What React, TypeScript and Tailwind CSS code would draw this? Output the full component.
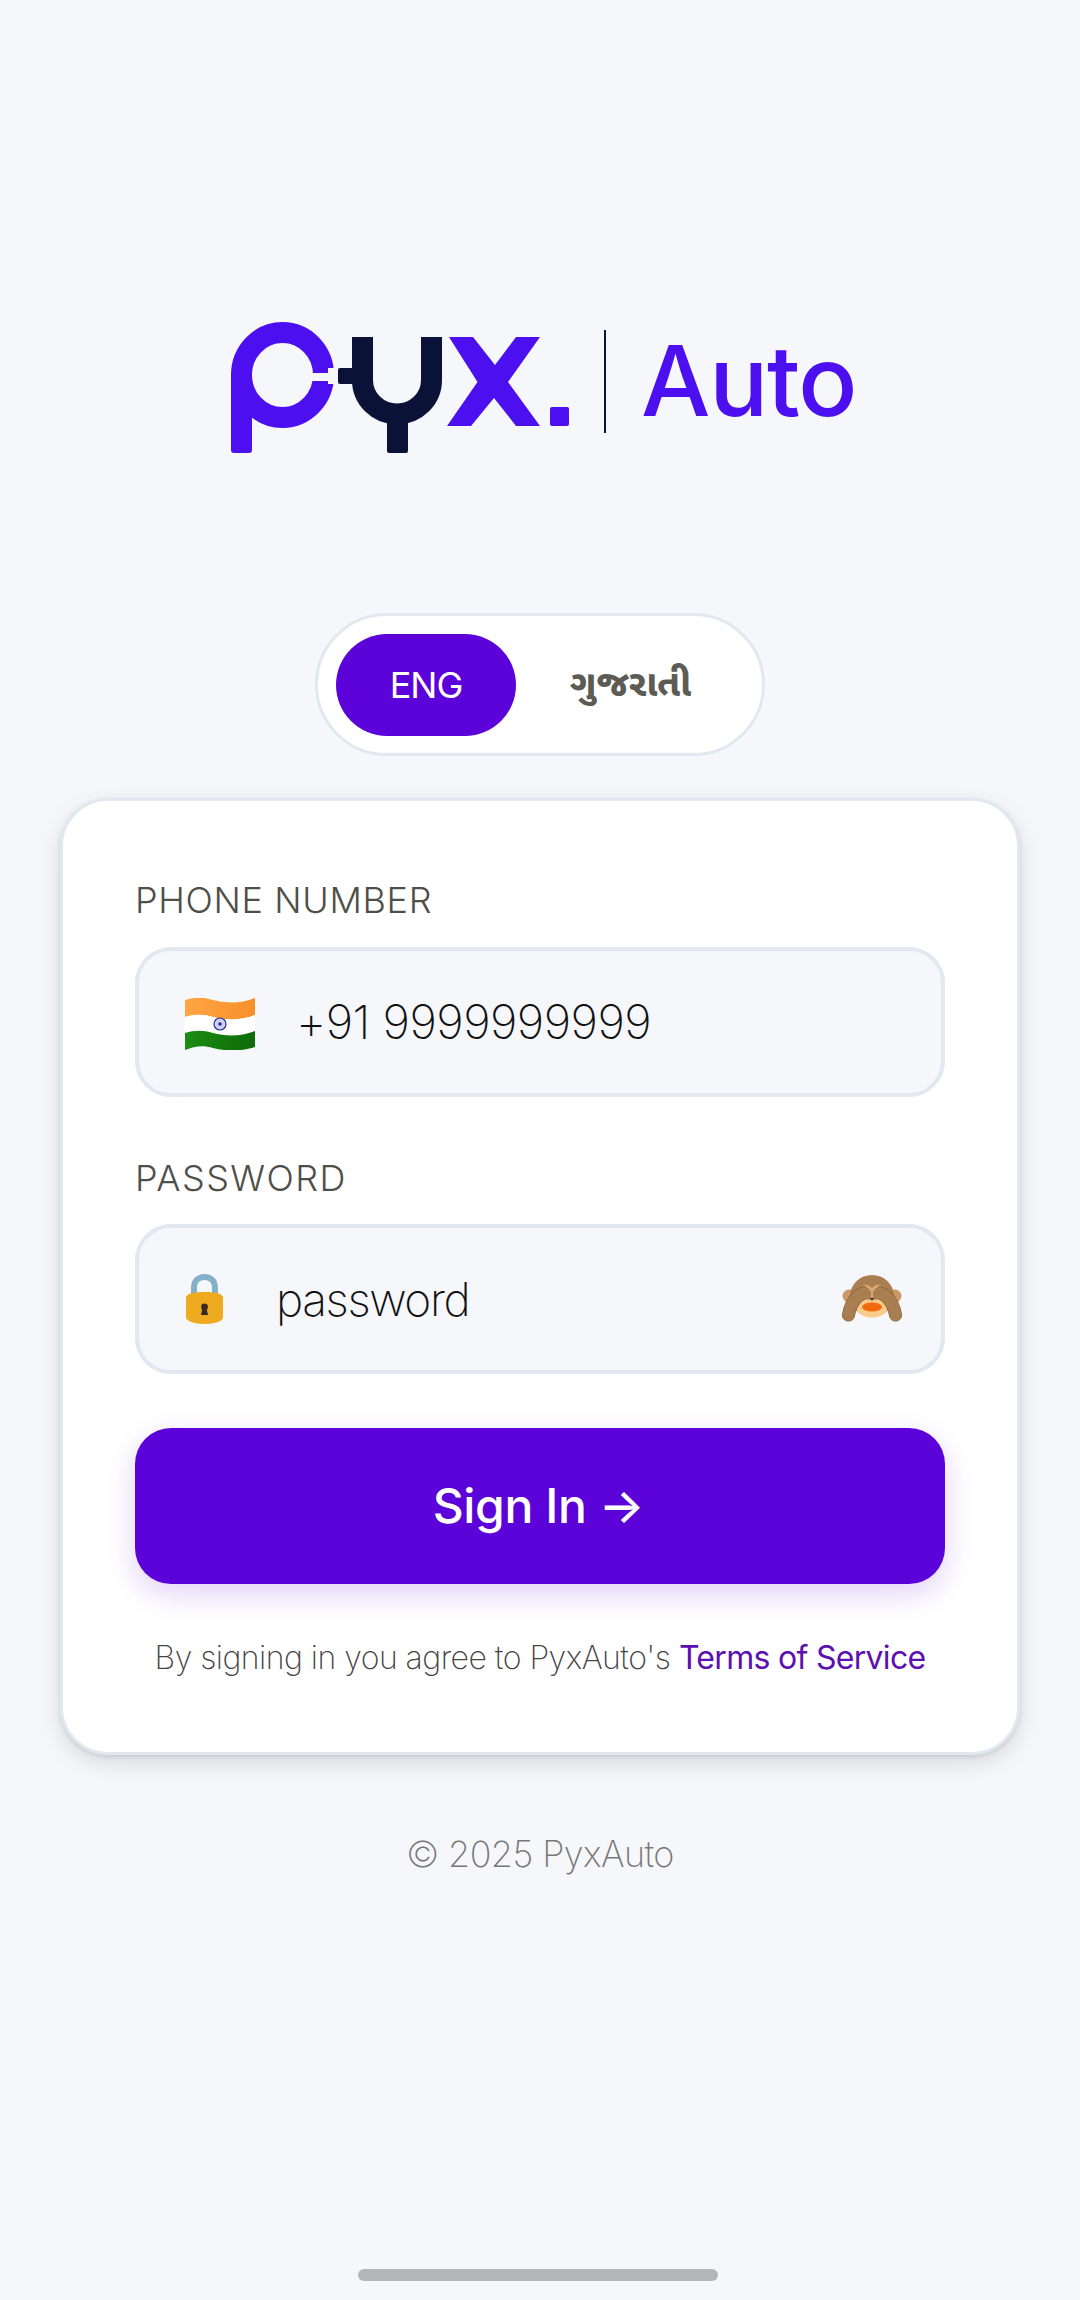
import React from 'react';

const Logo = () => (
  <svg width="340" height="134" viewBox="231 320 340 134" className="block shrink-0" aria-label="pyx logo">
    {/* p: ring, stem, then the stepped notch cut out of the ring */}
    <ellipse cx="282.5" cy="375" rx="41" ry="42.5" fill="none" stroke="#4b0ff0" strokeWidth="21" />
    <path d="M231 375 H252 V450 Q252 453 249 453 H234 Q231 453 231 450 Z" fill="#4b0ff0" />
    <path d="M312 373 H328 V368 H336 V384 H328 V381 H312 Z" fill="#f5f7fb" />
    {/* y */}
    <path d="M362.5 337 V380 A34.5 34 0 0 0 431.5 380 V337" fill="none" stroke="#0a1238" strokeWidth="21" />
    <rect x="338" y="368" width="20" height="16" rx="2" fill="#0a1238" />
    <rect x="387" y="405" width="21" height="48" rx="2" fill="#0a1238" />
    {/* x */}
    <polygon points="449,337 473,337 495,365 516,337 540,337 508,382 540,426 516,426 494,398 471,426 447,426 477.5,382" fill="#4b0ff0" />
    <rect x="550" y="407" width="19" height="19" rx="2" fill="#4b0ff0" />
  </svg>
);

const IndiaFlag = () => (
  <svg width="70" height="52" viewBox="0 0 70 52" className="mt-[3px]">
    <defs>
      <linearGradient id="saffron" x1="0" x2="1" y1="0" y2="0">
        <stop offset="0" stopColor="#ffa544" />
        <stop offset="1" stopColor="#f7902a" />
      </linearGradient>
      <linearGradient id="green" x1="0" x2="1" y1="0" y2="0">
        <stop offset="0" stopColor="#1c8c12" />
        <stop offset="1" stopColor="#0d6b0a" />
      </linearGradient>
    </defs>
    <path d="M0 2 C10 -1 18 -1 28 2 C40 5 55 6 70 0 V17 C55 23 40 22 28 19 C18 16 10 16 0 19 Z" fill="url(#saffron)" />
    <path d="M0 19 C10 16 18 16 28 19 C40 22 55 23 70 17 V33 C55 39 40 38 28 35 C18 32 10 32 0 35 Z" fill="#ffffff" />
    <path d="M0 35 C10 32 18 32 28 35 C40 38 55 39 70 33 V49 C55 54 40 53 28 50 C18 47 10 48 0 52 Z" fill="url(#green)" />
    <circle cx="35" cy="26" r="6" fill="#cfd2f5" stroke="#2b2f8f" strokeWidth="1.2" />
    <circle cx="35" cy="26" r="1.8" fill="#2b2f8f" />
  </svg>
);

const LockEmoji = () => (
  <svg width="37" height="50" viewBox="0 0 37 50">
    <path d="M8 22 V14 C8 7 12 3 18.5 3 C25 3 29 7 29 14 V22" fill="none" stroke="#84b0c9" strokeWidth="6" />
    <path d="M0 24 C0 20 6 18 18.5 18 C31 18 37 20 37 24 V43 C37 47 30 50 18.5 50 C7 50 0 47 0 43 Z" fill="#eeab1f" />
    <circle cx="18.5" cy="33" r="3.4" fill="#3e2723" />
    <path d="M16.5 34 H20.5 L22 41 H15 Z" fill="#3e2723" />
  </svg>
);

const MonkeyEmoji = () => (
  <svg width="62" height="50" viewBox="0 0 62 50">
    <circle cx="8" cy="22" r="6.5" fill="#c99a63" />
    <circle cx="54" cy="22" r="6.5" fill="#c99a63" />
    <ellipse cx="31" cy="22" rx="22" ry="21" fill="#a97f52" />
    <ellipse cx="31" cy="33" rx="16" ry="10.5" fill="#f9cc8b" />
    <ellipse cx="31" cy="33" rx="10" ry="4.5" fill="#f26a0f" />
    <path d="M28 19 C20 17 10 26 7.5 41" fill="none" stroke="#7d5a34" strokeWidth="13" strokeLinecap="round" />
    <path d="M34 19 C42 17 52 26 54.5 41" fill="none" stroke="#7d5a34" strokeWidth="13" strokeLinecap="round" />
    <path d="M28 19 C20 17 10 26 7.5 41" fill="none" stroke="#a97f52" strokeWidth="12" strokeLinecap="round" />
    <path d="M34 19 C42 17 52 26 54.5 41" fill="none" stroke="#a97f52" strokeWidth="12" strokeLinecap="round" />
    <path d="M22 11 C26 10 29 12 31 14 C33 12 36 10 40 11 C36 13 33 15 32 18 V24 H30 V18 C29 15 26 13 22 11 Z" fill="#d9ab72" />
    <path d="M29 24 H33 L31 27 Z" fill="#3e2723" />
  </svg>
);

const App = () => {
  return (
    <div className="flex h-[2300px] w-[1080px] flex-col items-center bg-[#f5f7fb] pt-[320px] font-['Inter',sans-serif]">
      {/* Logo */}
      <div className="ml-[6px] flex h-[134px] w-[624px] items-center">
        <Logo />
        <div className="mb-[11px] ml-[33px] h-[103px] w-[2px] shrink-0 bg-[#0a1238]" />
        <span className="mb-[12px] ml-[35px] text-[98px] leading-none font-medium tracking-[-1.2px] text-[#4b0ff0]">Auto</span>
      </div>

      {/* Language toggle */}
      <div className="mt-[159px] flex h-[143px] w-[450px] items-center rounded-full border-[3px] border-[#e2e8f0] bg-white pl-[18px]">
        <div className="flex h-[102px] w-[180px] items-center justify-center rounded-full bg-[#5b03d9] text-[36px] tracking-[-1px] text-white">
          ENG
        </div>
        <div className="flex flex-1 items-center justify-center pt-[6px] pr-[17px] font-['Noto_Sans_Gujarati','Noto_Sans',sans-serif] text-[36px] font-extrabold text-[#5c5c54]">
          ગુજરાતી
        </div>
      </div>

      {/* Card */}
      <div className="mt-[42px] h-[957px] w-[960px] rounded-[48px] border-[3px] border-[#e2e8f0] bg-white px-[73px] pt-[77px] shadow-[0_8px_24px_rgba(0,0,0,0.12),0_2px_4px_rgba(0,0,0,0.1)]">
        <div className="mx-[-1px]">
          <label className="block text-[36px] leading-[44px] font-light tracking-[0.65px] text-[#4f4f48]">PHONE NUMBER</label>
          <div className="mt-[25px] flex h-[150px] items-center rounded-[36px] border-4 border-[#e2e8f0] bg-[#f5f7fb] pl-[46px]">
            <IndiaFlag />
            <span className="ml-[41px] text-[47px] font-extralight tracking-[-0.55px] text-[#111]">+91 9999999999</span>
          </div>

          <label className="mt-[59px] block text-[36px] leading-[44px] font-light tracking-[1.4px] text-[#4f4f48]">PASSWORD</label>
          <div className="mt-[24px] flex h-[150px] items-center rounded-[36px] border-4 border-[#e2e8f0] bg-[#f5f7fb] pr-[38px] pl-[47px]">
            <LockEmoji />
            <span className="ml-[53px] text-[46px] font-extralight tracking-[-1.4px] text-[#111]">password</span>
            <span className="ml-auto">
              <MonkeyEmoji />
            </span>
          </div>

          <button className="mt-[54px] flex h-[156px] w-full items-center justify-center rounded-[36px] bg-[#5b03d9] pr-[3px] text-[48px] font-medium tracking-[-0.4px] text-white shadow-[0_10px_30px_rgba(91,3,217,0.18)]">
            Sign In →
          </button>

          <p className="mt-[50px] text-center text-[32px] font-extralight tracking-[-0.53px] text-[#444]">
            By signing in you agree to PyxAuto's <span className="font-normal tracking-[-0.7px] text-[#5b10b0]">Terms of Service</span>
          </p>
        </div>
      </div>

      <p className="mt-[72px] text-[36px] font-extralight tracking-[-0.6px] text-[#777]">© 2025 PyxAuto</p>

      {/* Home indicator */}
      <div className="mt-auto mb-[19px] ml-[-4px] h-[12px] w-[360px] rounded-full bg-[#b4b5b8]" />
    </div>
  );
};

export default App;
